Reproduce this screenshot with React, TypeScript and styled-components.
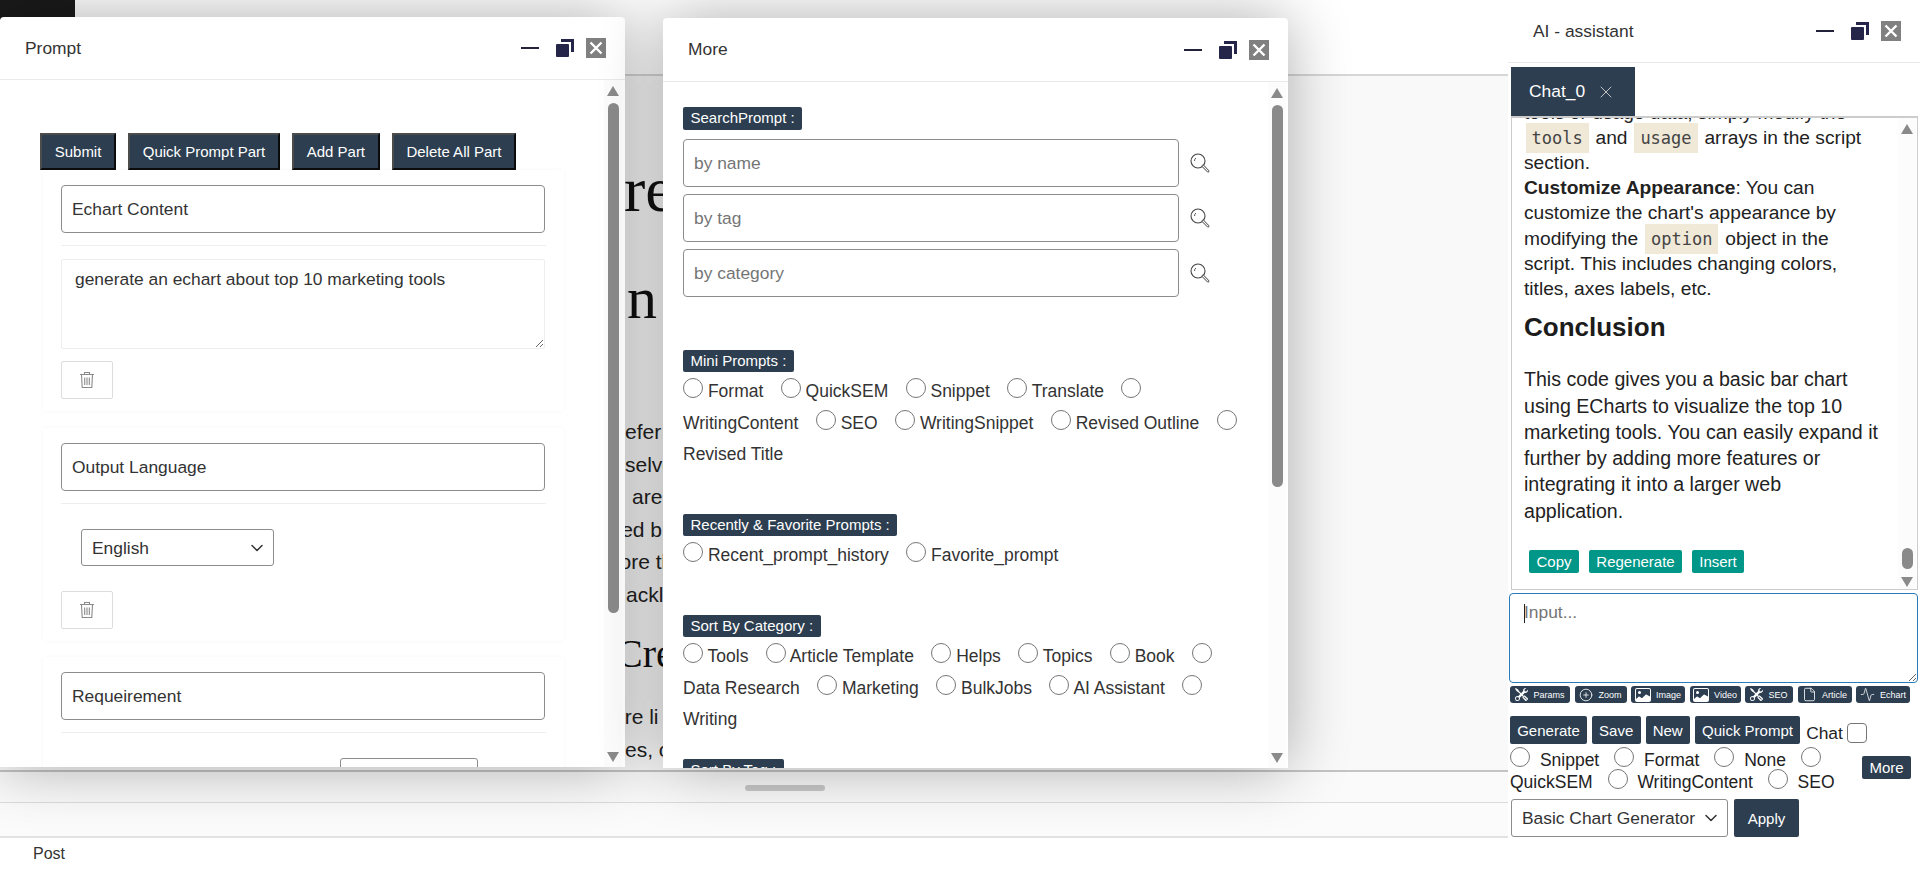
import React from "react";
import styled, { createGlobalStyle } from "styled-components";
import { CirclePlus, File, Activity, ChevronDown, X } from "lucide-react";
import { BsTools, BsImage } from "react-icons/bs";

const NAVY = "#2c3e50";

const Global = createGlobalStyle`
  html, body { margin: 0; padding: 0; height: 100%; overflow: hidden; background: #fff; }
  * { box-sizing: border-box; }
  body { font-family: "Liberation Sans", Arial, sans-serif; color: #333; }
  input::placeholder, textarea::placeholder { color: #757575; opacity: 1; }
`;

const Page = styled.div`
  position: relative;
  width: 1920px;
  height: 869px;
  overflow: hidden;
  display: flex;
  flex-direction: column;
  background: #fff;
`;

/* ---------- page behind the windows ---------- */
const TopBar = styled.div`
  height: 76px;
  flex: none;
  background: #fff;
  border-bottom: 2px solid #d6d6d6;
`;
const Logo = styled.div`
  width: 75px;
  height: 20px;
  background: #1a1a1a;
`;
const Editor = styled.div`
  height: 696px;
  flex: none;
  overflow: hidden;
  background: #f9f9f9;
  padding-top: 82px;
  border-bottom: 2px solid #c4c4c4;
  font-family: "Liberation Serif", serif;
  color: #111;
`;
const Heading = styled.div<{ $x: number; $size: number; $top: number }>`
  white-space: nowrap;
  padding-left: ${(p) => p.$x}px;
  margin-top: ${(p) => p.$top}px;
  font-size: ${(p) => p.$size}px;
  line-height: ${(p) => p.$size}px;
`;
const ArticleLine = styled.div<{ $x: number; $top?: number }>`
  white-space: nowrap;
  padding-left: ${(p) => p.$x}px;
  margin-top: ${(p) => p.$top ?? 0}px;
  font-family: "Liberation Sans", sans-serif;
  font-size: 21px;
  line-height: 32.5px;
  color: #222;
`;
const HandleRow = styled.div`
  height: 31px;
  flex: none;
  background: #fafafa;
  border-bottom: 1px solid #dcdcdc;
  padding: 13px 0 0 745px;
`;
const Handle = styled.div`
  width: 80px;
  height: 6px;
  border-radius: 3px;
  background: #c8c8c8;
`;
const BlankRow = styled.div`
  height: 35px;
  flex: none;
  background: #fbfbfb;
  border-bottom: 2px solid #e2e2e2;
`;
const PostRow = styled.div`
  flex: 1;
  background: #fff;
  padding-left: 33px;
  font-size: 16px;
  line-height: 31px;
  color: #333;
`;

/* ---------- floating windows ---------- */
const FloatWindow = styled.section<{ $left: number; $top: number }>`
  position: absolute;
  left: ${(p) => p.$left}px;
  top: ${(p) => p.$top}px;
  width: 625px;
  height: 750px;
  background: #fff;
  border-radius: 4px 4px 0 0;
  box-shadow: 0 0 62px rgba(0, 0, 0, 0.32);
  display: flex;
  flex-direction: column;
  overflow: visible;
`;
const DockWindow = styled.section`
  position: absolute;
  left: 1508px;
  top: 0;
  width: 412px;
  height: 869px;
  background: #fff;
  display: flex;
  flex-direction: column;
`;
const WindowHeader = styled.header<{ $h: number; $pl: number }>`
  height: ${(p) => p.$h}px;
  flex: none;
  display: flex;
  align-items: center;
  padding: 0 19px 0 ${(p) => p.$pl}px;
  border-bottom: 1px solid #eaeaea;
`;
const WindowTitle = styled.h2`
  margin: 0;
  flex: 1;
  font-size: 17.4px;
  font-weight: 400;
  color: #333;
`;
const Controls = styled.div`
  display: flex;
  align-items: center;
  gap: 12px;
`;
const MinLine = styled.span`
  display: block;
  width: 18px;
  height: 2px;
  background: #22223a;
  margin-right: 5px;
`;
const CloseBox = styled.span`
  width: 20px;
  height: 20px;
  background: #808080;
  display: flex;
  align-items: center;
  justify-content: center;
`;

function WindowControls() {
  return (
    <Controls>
      <MinLine />
      <svg width="18" height="18" viewBox="0 0 18 18">
        <rect x="0" y="5" width="13" height="13" rx="1" fill="#25254a" />
        <path d="M5 0H18V13H15V3H5Z" fill="#25254a" />
      </svg>
      <CloseBox>
        <svg width="14" height="14" viewBox="0 0 14 14">
          <path d="M1.5 1.5L12.5 12.5M12.5 1.5L1.5 12.5" stroke="#fff" strokeWidth="2.4" />
        </svg>
      </CloseBox>
    </Controls>
  );
}

const WindowBody = styled.div`
  flex: 1;
  min-height: 0;
  display: flex;
`;
const BodyContent = styled.div`
  flex: 1;
  min-width: 0;
  overflow: hidden;
`;

/* ---------- scrollbar drawing ---------- */
const Track = styled.div<{ $mr: number; $pt: number; $pb: number }>`
  width: 18px;
  flex: none;
  margin-right: ${(p) => p.$mr}px;
  padding: ${(p) => p.$pt}px 0 ${(p) => p.$pb}px;
  background: #fcfcfc;
  display: flex;
  flex-direction: column;
  align-items: center;
`;
const ArrowUp = styled.div`
  width: 0;
  height: 0;
  border-left: 6px solid transparent;
  border-right: 6px solid transparent;
  border-bottom: 10px solid #8a8a8a;
`;
const ArrowDown = styled.div`
  width: 0;
  height: 0;
  margin-top: auto;
  border-left: 6px solid transparent;
  border-right: 6px solid transparent;
  border-top: 10px solid #8a8a8a;
`;
const Thumb = styled.div<{ $top: number; $h: number }>`
  width: 11px;
  height: ${(p) => p.$h}px;
  margin-top: ${(p) => p.$top}px;
  border-radius: 6px;
  background: #8a8a8a;
`;

/* ---------- prompt window ---------- */
const PromptContent = styled(BodyContent)`
  padding-top: 53px;
`;
const Toolbar = styled.div`
  display: flex;
  gap: 12px;
  padding-left: 40px;
`;
const BevelButton = styled.button`
  height: 37px;
  padding: 0 12.7px;
  font: 15px "Liberation Sans", sans-serif;
  color: #fff;
  background: ${NAVY};
  border-width: 2px;
  border-style: solid;
  border-color: #4c4c4c #0b0b0b #0b0b0b #4c4c4c;
`;
const PartCard = styled.div<{ $gap: number }>`
  width: 521px;
  margin: ${(p) => p.$gap}px 0 0 43px;
  padding: 15px 18px 12px;
  border-radius: 3px;
  background: #fff;
  box-shadow: 0 0 4px rgba(0, 0, 0, 0.04);
`;
const TextField = styled.input<{ $w: number }>`
  display: block;
  width: ${(p) => p.$w}px;
  height: 48px;
  padding: 0 10px;
  font: 17.4px "Liberation Sans", sans-serif;
  color: #333;
  background: #fff;
  border: 1px solid #8c8c8c;
  border-radius: 4px;
  outline: none;
`;
const Rule = styled.hr`
  height: 1px;
  margin: 12px 0 13px;
  border: 0;
  background: #eee;
`;
const PartText = styled.textarea`
  display: block;
  width: 484px;
  height: 90px;
  padding: 9px 13px;
  font: 17.4px "Liberation Sans", sans-serif;
  color: #333;
  border: 1px solid #eee;
  border-radius: 2px;
  outline: none;
`;
const DeleteButton = styled.button<{ $top: number }>`
  display: flex;
  align-items: center;
  justify-content: center;
  width: 52px;
  height: 38px;
  margin-top: ${(p) => p.$top}px;
  background: #fff;
  border: 1px solid #ddd;
  border-radius: 2px;
`;
const SelectSlot = styled.div<{ $x: number; $top: number }>`
  padding: ${(p) => p.$top}px 0 0 ${(p) => p.$x}px;
`;
const SelectWrap = styled.div<{ $w: number; $h: number }>`
  position: relative;
  flex: none;
  width: ${(p) => p.$w}px;
  height: ${(p) => p.$h}px;
  color: #333;
  svg {
    position: absolute;
    right: 7px;
    top: 50%;
    transform: translateY(-50%);
    pointer-events: none;
  }
`;
const NativeSelect = styled.select`
  appearance: none;
  width: 100%;
  height: 100%;
  padding: 0 10px;
  font: 17.4px "Liberation Sans", sans-serif;
  color: #333;
  background: #fff;
  border: 1px solid #8c8c8c;
  border-radius: 3px;
  outline: none;
`;

function TrashIcon() {
  return (
    <svg width="16" height="18" viewBox="0 0 16 18" fill="none" stroke="#8a8a8a" strokeWidth="1.1">
      <path d="M1 3.5H15M5.5 3.5V1.5H10.5V3.5" />
      <path d="M2.5 3.5L3.2 16.5H12.8L13.5 3.5" />
      <path d="M5.7 6.5V14M8 6.5V14M10.3 6.5V14" />
    </svg>
  );
}

/* ---------- more window ---------- */
const MoreContent = styled(BodyContent)`
  padding: 25px 27px 0 20px;
`;
const SectionLabel = styled.div<{ $top?: number }>`
  width: fit-content;
  height: 22.5px;
  margin-top: ${(p) => p.$top ?? 0}px;
  padding: 0 7.5px;
  font-size: 15px;
  line-height: 22px;
  color: #fff;
  background: ${NAVY};
  border-radius: 2px;
`;
const SearchList = styled.div`
  display: flex;
  flex-direction: column;
  gap: 7px;
  margin-top: 9.5px;
`;
const SearchRow = styled.div`
  display: flex;
  align-items: center;
  gap: 11px;
`;
const OptionBlock = styled.div`
  margin-top: 4px;
  font-size: 17.5px;
  line-height: 31.5px;
  color: #333;
`;
const Radio = styled.input.attrs({ type: "radio" })`
  width: 20px;
  height: 20px;
  margin: 0;
  vertical-align: -1px;
`;
const OptionText = styled.span`
  margin-right: 12.5px;
`;

function SearchIcon() {
  return (
    <svg width="20" height="20" viewBox="0 0 20 20" fill="none" stroke="#444">
      <circle cx="8" cy="8" r="7" strokeWidth="1.1" />
      <path d="M4.5 8a3.5 3.5 0 0 1 1.4-3" strokeWidth="0.9" />
      <path d="M13 13l5 5.2" strokeWidth="2.6" strokeLinecap="round" />
      <path d="M13 13l5 5.2" strokeWidth="1.1" stroke="#fff" strokeLinecap="round" />
    </svg>
  );
}

function Options({ items }: { items: string[] }) {
  return (
    <OptionBlock>
      {items.map((t) => (
        <React.Fragment key={t}>
          <Radio name={t} /> <OptionText>{t}</OptionText>{" "}
        </React.Fragment>
      ))}
    </OptionBlock>
  );
}

/* ---------- AI assistant ---------- */
const TabStrip = styled.div`
  height: 53px;
  flex: none;
  padding: 4px 0 0 3px;
`;
const ChatTab = styled.div`
  width: 124px;
  height: 49px;
  display: flex;
  align-items: center;
  gap: 11px;
  padding-left: 18px;
  font-size: 17.4px;
  color: #fff;
  background: ${NAVY};
`;
const ChatBox = styled.div`
  width: 407px;
  height: 474px;
  flex: none;
  margin-left: 3px;
  display: flex;
  overflow: hidden;
  border: 1px solid #ccc;
  border-top-width: 2px;
`;
const ChatScroll = styled.div`
  flex: 1;
  min-width: 0;
  display: flex;
  flex-direction: column;
  justify-content: flex-end;
  padding: 0 16px 16px 12px;
  overflow: hidden;
  color: #222;
`;
const ListText = styled.div`
  font-size: 19.2px;
  line-height: 25.2px;
`;
const Code = styled.code`
  margin: 0 1.5px;
  padding: 5px 6px;
  font: 17px "DejaVu Sans Mono", monospace;
  color: #444;
  background: #f0e9d8;
`;
const ChatHeading = styled.h3`
  margin: 11px 0 24px;
  font-size: 26px;
  line-height: 30px;
  font-weight: 700;
  color: #1c1c1c;
`;
const ChatPara = styled.p`
  margin: 0;
  font-size: 19.6px;
  line-height: 26.3px;
`;
const MsgActions = styled.div`
  display: flex;
  gap: 10px;
  margin: 26px 0 0 5px;
`;
const TealButton = styled.button<{ $w: number }>`
  width: ${(p) => p.$w}px;
  height: 23px;
  padding: 0;
  font: 15px "Liberation Sans", sans-serif;
  color: #fff;
  background: #009688;
  border: 0;
  border-radius: 2px;
`;
const InputWrap = styled.div`
  position: relative;
  flex: none;
  margin: 3px 0 0 1px;
`;
const ChatInput = styled.textarea`
  display: block;
  width: 409px;
  height: 90px;
  padding: 8px 14px;
  font: 17.4px "Liberation Sans", sans-serif;
  border: 1.5px solid #2a7ab8;
  border-radius: 4px;
  outline: none;
`;
const Caret = styled.span`
  position: absolute;
  left: 15px;
  top: 11px;
  width: 1px;
  height: 19px;
  background: #222;
`;
const MiniRow = styled.div`
  display: flex;
  gap: 4.5px;
  margin: 3px 0 0 2px;
`;
const MiniButton = styled.button<{ $w: number }>`
  width: ${(p) => p.$w}px;
  height: 17px;
  padding: 0;
  display: flex;
  align-items: center;
  justify-content: center;
  gap: 5px;
  font: 9px "Liberation Sans", sans-serif;
  color: #fff;
  background: ${NAVY};
  border: 0;
  border-radius: 3px;
`;
const ActionRow = styled.div`
  display: flex;
  align-items: flex-start;
  gap: 5px;
  margin: 13px 0 0 2px;
`;
const NavyButton = styled.button`
  height: 28px;
  padding: 0 7.2px;
  font: 15px "Liberation Sans", sans-serif;
  color: #fff;
  background: ${NAVY};
  border: 0;
  border-radius: 2px;
`;
const ChatToggle = styled.label`
  display: flex;
  align-items: center;
  gap: 4px;
  margin: 7px 0 0 1px;
  font-size: 17.4px;
  line-height: 20px;
  color: #222;
`;
const ChatCheck = styled.input.attrs({ type: "checkbox" })`
  appearance: none;
  width: 20px;
  height: 20px;
  margin: 0;
  background: #fff;
  border: 1px solid #767676;
  border-radius: 4px;
`;
const ModeRow = styled.div`
  display: flex;
  margin: 5px 0 0 2px;
`;
const ModeOptions = styled.div`
  width: 352px;
  font-size: 17.5px;
  line-height: 22px;
  color: #222;
`;
const ModeRadio = styled.input.attrs({ type: "radio" })`
  width: 20px;
  height: 20px;
  margin: -2px 5px -2px 0;
  vertical-align: -1px;
`;
const ModeText = styled.span`
  margin-right: 10px;
`;
const MoreButton = styled.button`
  width: 49px;
  height: 23px;
  margin-top: 7px;
  padding: 0;
  font: 15px "Liberation Sans", sans-serif;
  color: #fff;
  background: ${NAVY};
  border: 0;
  border-radius: 2px;
`;
const ApplyRow = styled.div`
  display: flex;
  gap: 6px;
  margin: 6px 0 0 3px;
`;
const ApplyButton = styled.button`
  width: 65px;
  height: 38px;
  padding: 0;
  font: 15px "Liberation Sans", sans-serif;
  color: #fff;
  background: ${NAVY};
  border: 0;
  border-radius: 2px;
`;

const tools: { label: string; w: number; icon: React.ReactNode }[] = [
  { label: "Params", w: 60, icon: <BsTools size={13} /> },
  { label: "Zoom", w: 52, icon: <CirclePlus size={14} strokeWidth={1.4} /> },
  { label: "Image", w: 54, icon: <BsImage size={16} /> },
  { label: "Video", w: 51, icon: <BsImage size={16} /> },
  { label: "SEO", w: 48, icon: <BsTools size={13} /> },
  { label: "Article", w: 54, icon: <File size={15} strokeWidth={1.3} /> },
  { label: "Echart", w: 54, icon: <Activity size={15} strokeWidth={1.2} /> },
];

export default function App() {
  return (
    <Page>
      <Global />
      <TopBar>
        <Logo />
      </TopBar>
      <Editor>
        <Heading $x={624} $size={64} $top={0}>re</Heading>
        <Heading $x={627} $size={60} $top={46}>n</Heading>
        <ArticleLine $x={625} $top={88}>efer to</ArticleLine>
        <ArticleLine $x={625}>selves</ArticleLine>
        <ArticleLine $x={632}>are</ArticleLine>
        <ArticleLine $x={606}>ized b</ArticleLine>
        <ArticleLine $x={602}>more than</ArticleLine>
        <ArticleLine $x={626}>ackle</ArticleLine>
        <Heading $x={616} $size={40} $top={23}>Create</Heading>
        <ArticleLine $x={613} $top={27}>are li</ArticleLine>
        <ArticleLine $x={625}>es, or</ArticleLine>
      </Editor>
      <HandleRow>
        <Handle />
      </HandleRow>
      <BlankRow />
      <PostRow>Post</PostRow>

      <FloatWindow $left={0} $top={17}>
        <WindowHeader $h={63} $pl={25}>
          <WindowTitle>Prompt</WindowTitle>
          <WindowControls />
        </WindowHeader>
        <WindowBody>
          <PromptContent>
            <Toolbar>
              <BevelButton>Submit</BevelButton>
              <BevelButton>Quick Prompt Part</BevelButton>
              <BevelButton>Add Part</BevelButton>
              <BevelButton>Delete All Part</BevelButton>
            </Toolbar>
            <PartCard $gap={0}>
              <TextField $w={484} defaultValue="Echart Content" />
              <Rule />
              <PartText defaultValue="generate an echart about top 10 marketing tools" />
              <DeleteButton $top={12}><TrashIcon /></DeleteButton>
            </PartCard>
            <PartCard $gap={17}>
              <TextField $w={484} defaultValue="Output Language" />
              <Rule />
              <SelectSlot $x={20} $top={12}>
                <SelectWrap $w={193} $h={37}>
                  <NativeSelect><option>English</option></NativeSelect>
                  <ChevronDown size={20} strokeWidth={1.8} />
                </SelectWrap>
              </SelectSlot>
              <DeleteButton $top={25}><TrashIcon /></DeleteButton>
            </PartCard>
            <PartCard $gap={16}>
              <TextField $w={484} defaultValue="Requeirement" />
              <Rule />
              <SelectSlot $x={279} $top={12}>
                <SelectWrap $w={138} $h={37}>
                  <NativeSelect />
                </SelectWrap>
              </SelectSlot>
            </PartCard>
          </PromptContent>
          <Track $mr={3} $pt={6} $pb={5}>
            <ArrowUp />
            <Thumb $top={7} $h={510} />
            <ArrowDown />
          </Track>
        </WindowBody>
      </FloatWindow>

      <FloatWindow $left={663} $top={18}>
        <WindowHeader $h={64} $pl={25}>
          <WindowTitle>More</WindowTitle>
          <WindowControls />
        </WindowHeader>
        <WindowBody>
          <MoreContent>
            <SectionLabel>SearchPrompt :</SectionLabel>
            <SearchList>
              {["by name", "by tag", "by category"].map((p) => (
                <SearchRow key={p}>
                  <TextField $w={496} placeholder={p} />
                  <SearchIcon />
                </SearchRow>
              ))}
            </SearchList>
            <SectionLabel $top={52.5}>Mini Prompts :</SectionLabel>
            <Options items={["Format", "QuickSEM", "Snippet", "Translate", "WritingContent", "SEO", "WritingSnippet", "Revised Outline", "Revised Title"]} />
            <SectionLabel $top={43}>Recently &amp; Favorite Prompts :</SectionLabel>
            <Options items={["Recent_prompt_history", "Favorite_prompt"]} />
            <SectionLabel $top={43}>Sort By Category :</SectionLabel>
            <Options items={["Tools", "Article Template", "Helps", "Topics", "Book", "Data Research", "Marketing", "BulkJobs", "AI Assistant", "Writing"]} />
            <SectionLabel $top={23}>Sort By Tag :</SectionLabel>
          </MoreContent>
          <Track $mr={2} $pt={6} $pb={5}>
            <ArrowUp />
            <Thumb $top={7} $h={382} />
            <ArrowDown />
          </Track>
        </WindowBody>
      </FloatWindow>

      <DockWindow>
        <WindowHeader $h={63} $pl={25}>
          <WindowTitle>AI - assistant</WindowTitle>
          <WindowControls />
        </WindowHeader>
        <TabStrip>
          <ChatTab>
            Chat_0 <X size={20} strokeWidth={1.1} color="#d0d0d0" />
          </ChatTab>
        </TabStrip>
        <ChatBox>
          <ChatScroll>
            <ListText>
              tools or usage data, simply modify the <Code>tools</Code> and <Code>usage</Code> arrays in the script section.
              <br />
              <strong>Customize Appearance</strong>: You can customize the chart's appearance by modifying the <Code>option</Code> object in the script. This includes changing colors, titles, axes labels, etc.
            </ListText>
            <ChatHeading>Conclusion</ChatHeading>
            <ChatPara>
              This code gives you a basic bar chart using ECharts to visualize the top 10 marketing tools. You can easily expand it further by adding more features or integrating it into a larger web application.
            </ChatPara>
            <MsgActions>
              <TealButton $w={50}>Copy</TealButton>
              <TealButton $w={93}>Regenerate</TealButton>
              <TealButton $w={52}>Insert</TealButton>
            </MsgActions>
          </ChatScroll>
          <Track $mr={1} $pt={6} $pb={2}>
            <ArrowUp />
            <Thumb $top={414} $h={21} />
            <ArrowDown />
          </Track>
        </ChatBox>
        <InputWrap>
          <ChatInput placeholder="Input..." />
          <Caret />
        </InputWrap>
        <MiniRow>
          {tools.map((t) => (
            <MiniButton key={t.label} $w={t.w}>
              {t.icon}
              {t.label}
            </MiniButton>
          ))}
        </MiniRow>
        <ActionRow>
          <NavyButton>Generate</NavyButton>
          <NavyButton>Save</NavyButton>
          <NavyButton>New</NavyButton>
          <NavyButton>Quick Prompt</NavyButton>
          <ChatToggle>Chat <ChatCheck /></ChatToggle>
        </ActionRow>
        <ModeRow>
          <ModeOptions>
            {["Snippet", "Format", "None", "QuickSEM", "WritingContent", "SEO"].map((t) => (
              <React.Fragment key={t}>
                <ModeRadio name={t} /> <ModeText>{t}</ModeText>{" "}
              </React.Fragment>
            ))}
          </ModeOptions>
          <MoreButton>More</MoreButton>
        </ModeRow>
        <ApplyRow>
          <SelectWrap $w={217} $h={38}>
            <NativeSelect><option>Basic Chart Generator</option></NativeSelect>
            <ChevronDown size={20} strokeWidth={1.8} />
          </SelectWrap>
          <ApplyButton>Apply</ApplyButton>
        </ApplyRow>
      </DockWindow>
    </Page>
  );
}
